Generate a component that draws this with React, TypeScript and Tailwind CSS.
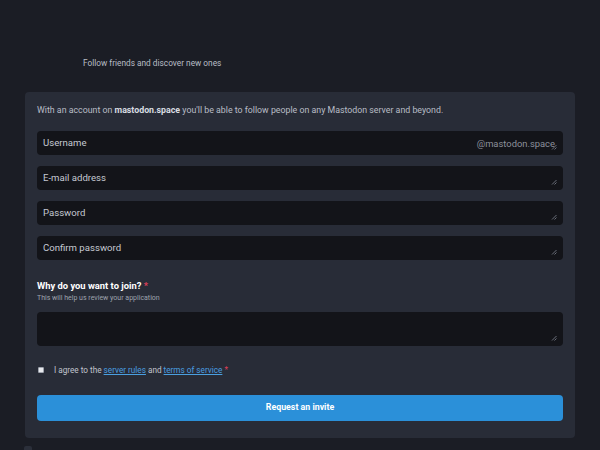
const fields = ["E-mail address", "Password", "Confirm password"];

function Grip() {
  return (
    <svg className="absolute right-[6px] bottom-[5px]" width="6" height="6" viewBox="0 0 6 6">
      <path d="M5.5 1 L1 5.5 M5.5 3.5 L3.5 5.5" stroke="#6b6f7a" strokeWidth="1" />
    </svg>
  );
}

function Field({ label, suffix }: { label: string; suffix?: string }) {
  return (
    <div className="relative flex h-[24px] items-center justify-between rounded-[4px] bg-[#131419] pl-[6px] pr-[8px] pt-[2px] text-[9.6px] text-[#c5c9d2]">
      <span>{label}</span>
      {suffix && <span className="text-[9.4px] text-[#8d919b]">{suffix}</span>}
      <Grip />
    </div>
  );
}

export default function App() {
  return (
    <div
      className="relative h-[450px] w-[600px] overflow-hidden bg-[#1b1d25]"
      style={{ fontFamily: "Roboto, 'Liberation Sans', sans-serif" }}
    >
      <div className="pl-[83px] pt-[57px] text-[8.3px] text-[#b9bdc6]">Follow friends and discover new ones</div>
      <div className="mx-[25px] mt-[23px] rounded-[4px] bg-[#282c37] px-[12px] pb-[17px] pt-[12px]">
        <p className="text-[8.8px] text-[#b9bdc6]">
          With an account on <strong className="font-bold text-[#d9dce2]">mastodon.space</strong> you'll be able to follow people on any Mastodon server and beyond.
        </p>
        <div className="mt-[13px] flex flex-col gap-[11px]">
          <Field label="Username" suffix="@mastodon.space" />
          {fields.map((f) => (
            <Field key={f} label={f} />
          ))}
        </div>
        <div className="mt-[19px] text-[9.4px] font-bold text-white">
          Why do you want to join? <span className="text-[#df405a]">*</span>
        </div>
        <div className="mt-0 text-[7px] text-[#9ea3ad]">This will help us review your application</div>
        <div className="relative mt-[9px] h-[34px] rounded-[4px] bg-[#131419]">
          <Grip />
        </div>
        <div className="mt-[18px] flex items-center text-[8.2px] text-[#c1c5cd]">
          <span className="ml-[1px] mr-[10px] h-[6px] w-[6px] rounded-[1px] border border-[#9ea3ad] bg-[#e6e8ec]" />
          <span>
            I agree to the <span className="text-[#4a9fe0] underline">server rules</span> and{" "}
            <span className="text-[#4a9fe0] underline">terms of service</span> <span className="text-[#df405a]">*</span>
          </span>
        </div>
        <div className="mt-[18px] flex h-[26px] items-center justify-center rounded-[4px] bg-[#2b90d9] pt-[1px] text-[8.8px] font-bold text-white">
          Request an invite
        </div>
      </div>
      <div className="ml-[24px] mt-[8px] h-[4px] w-[8px] rounded-t-[2px] bg-[#2b2f3a]" />
    </div>
  );
}
